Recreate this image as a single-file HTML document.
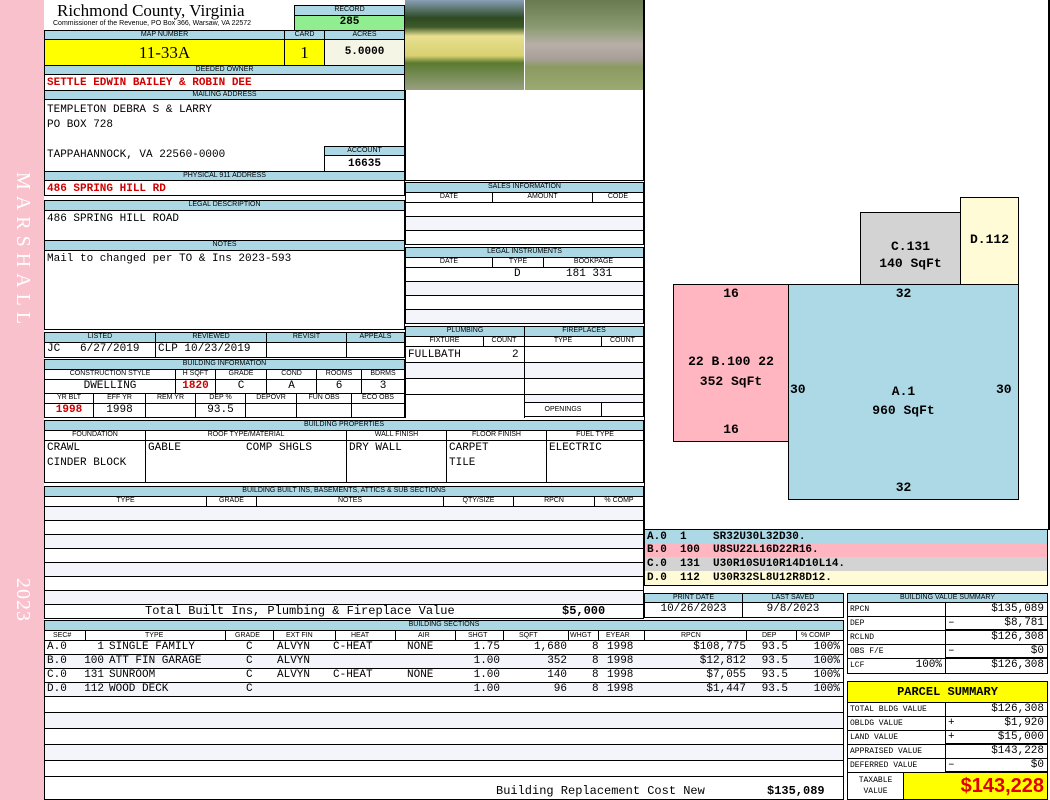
<!DOCTYPE html>
<html><head><meta charset="utf-8"><style>
body{margin:0;width:1050px;height:800px;position:relative;background:#fff;overflow:hidden;font-family:"Liberation Sans",sans-serif}
div{position:absolute;box-sizing:border-box}
.h{background:#acd8e6;border:1px solid #000;font-size:7px;text-align:center;line-height:8px;color:#000;white-space:nowrap;overflow:hidden}
.c{border:1px solid #000;font-family:"Liberation Mono",monospace;font-size:11px;line-height:13px;white-space:nowrap;overflow:hidden;padding-left:2px}
.r{color:#d00000;font-weight:bold}
.ctr{text-align:center;padding:0}
.rt{text-align:right;padding-right:3px}
.sk{font-family:"Liberation Mono",monospace;font-size:13px;font-weight:bold;text-align:center}
.lg{font-family:"Liberation Mono",monospace;font-size:11px;font-weight:bold;line-height:14px;padding-left:2px;height:14px;left:644px;width:404px;border-left:1px solid #000;border-right:1px solid #000;white-space:pre}
.alt{background:#f3f5fa}
.s span{position:absolute;top:0}
.s .a{left:2px}.s .b{left:29px;width:30px;text-align:right}.s .t{left:64px}.s .g{left:201px}.s .e{left:232px}.s .ht{left:288px}.s .ai{left:362px}
.s .sh{left:407px;width:48px;text-align:right}.s .sq{left:473px;width:49px;text-align:right}.s .w{left:547px}.s .y{left:562px}
.s .rp{left:640px;width:61px;text-align:right}.s .dp{left:700px;width:43px;text-align:right}.s .pc{left:750px;width:45px;text-align:right}
.hd span{position:absolute}
.hd i{position:absolute;top:-1px;height:11px;border-left:1px solid #000}
</style></head><body>
<!-- sidebar -->
<div style="left:0;top:0;width:44px;height:800px;background:#f9c1cc"></div>
<div style="left:34px;top:172px;transform-origin:0 0;transform:rotate(90deg);color:#fff;font-family:'Liberation Serif',serif;font-size:20px;letter-spacing:6px;white-space:nowrap">MARSHALL</div>
<div style="left:34px;top:578px;transform-origin:0 0;transform:rotate(90deg);color:#fff;font-family:'Liberation Serif',serif;font-size:20px;letter-spacing:1px;white-space:nowrap">2023</div>

<!-- header -->
<div style="left:57px;top:1px;font-family:'Liberation Serif',serif;font-size:17px;white-space:nowrap">Richmond County, Virginia</div>
<div style="left:53px;top:20px;font-size:7px;white-space:nowrap">Commissioner of the Revenue, PO Box 366, Warsaw, VA 22572</div>
<div class="h" style="left:294px;top:5px;width:111px;height:11px">RECORD</div>
<div class="c ctr" style="left:294px;top:15px;width:111px;height:16px;background:#90ee90;font-weight:bold;font-size:11px">285</div>
<div class="h" style="left:44px;top:30px;width:241px;height:10px">MAP NUMBER</div>
<div class="h" style="left:284px;top:30px;width:41px;height:10px">CARD</div>
<div class="h" style="left:324px;top:30px;width:81px;height:10px">ACRES</div>
<div class="c ctr" style="left:44px;top:39px;width:241px;height:27px;background:#ffff00;font-family:'Liberation Serif',serif;font-size:17px;line-height:25px">11-33A</div>
<div class="c ctr" style="left:284px;top:39px;width:41px;height:27px;background:#ffff00;font-family:'Liberation Serif',serif;font-size:17px;line-height:25px">1</div>
<div class="c ctr" style="left:324px;top:39px;width:81px;height:27px;background:#f5f5e6;font-weight:bold;line-height:25px">5.0000</div>
<div class="h" style="left:44px;top:65px;width:361px;height:10px">DEEDED OWNER</div>
<div class="c r" style="left:44px;top:74px;width:361px;height:17px;line-height:17px">SETTLE EDWIN BAILEY &amp; ROBIN DEE</div>
<div class="h" style="left:44px;top:90px;width:361px;height:10px">MAILING ADDRESS</div>
<div class="c" style="left:44px;top:99px;width:361px;height:73px;padding-top:3px;line-height:15px">TEMPLETON DEBRA S &amp; LARRY<br>PO BOX 728<br><br>TAPPAHANNOCK, VA 22560-0000</div>
<div class="h" style="left:324px;top:146px;width:81px;height:10px">ACCOUNT</div>
<div class="c ctr" style="left:324px;top:155px;width:81px;height:17px;font-weight:bold;line-height:16px">16635</div>
<div class="h" style="left:44px;top:171px;width:361px;height:10px">PHYSICAL 911 ADDRESS</div>
<div class="c r" style="left:44px;top:180px;width:361px;height:16px;line-height:16px">486 SPRING HILL RD</div>
<div class="h" style="left:44px;top:200px;width:361px;height:11px">LEGAL DESCRIPTION</div>
<div class="c" style="left:44px;top:210px;width:361px;height:31px;padding-top:2px">486 SPRING HILL ROAD</div>
<div class="h" style="left:44px;top:240px;width:361px;height:11px">NOTES</div>
<div class="c" style="left:44px;top:250px;width:361px;height:80px;padding-top:2px">Mail to changed per TO &amp; Ins 2023-593</div>

<!-- listed -->
<div class="h" style="left:44px;top:332px;width:112px;height:11px">LISTED</div>
<div class="h" style="left:155px;top:332px;width:112px;height:11px">REVIEWED</div>
<div class="h" style="left:266px;top:332px;width:81px;height:11px">REVISIT</div>
<div class="h" style="left:346px;top:332px;width:59px;height:11px">APPEALS</div>
<div class="c" style="left:44px;top:342px;width:112px;height:16px">JC &nbsp;&nbsp;6/27/2019</div>
<div class="c" style="left:155px;top:342px;width:112px;height:16px">CLP 10/23/2019</div>
<div class="c" style="left:266px;top:342px;width:81px;height:16px"></div>
<div class="c" style="left:346px;top:342px;width:59px;height:16px"></div>

<!-- building info -->
<div class="h" style="left:44px;top:359px;width:361px;height:11px">BUILDING INFORMATION</div>
<div class="h" style="left:44px;top:369px;width:132px;height:11px;background:#fff">CONSTRUCTION STYLE</div>
<div class="h" style="left:175px;top:369px;width:41px;height:11px;background:#fff">H SQFT</div>
<div class="h" style="left:215px;top:369px;width:52px;height:11px;background:#fff">GRADE</div>
<div class="h" style="left:266px;top:369px;width:51px;height:11px;background:#fff">COND</div>
<div class="h" style="left:316px;top:369px;width:46px;height:11px;background:#fff">ROOMS</div>
<div class="h" style="left:361px;top:369px;width:44px;height:11px;background:#fff">BDRMS</div>
<div class="c ctr" style="left:44px;top:379px;width:132px;height:15px">DWELLING</div>
<div class="c ctr r" style="left:175px;top:379px;width:41px;height:15px">1820</div>
<div class="c ctr" style="left:215px;top:379px;width:52px;height:15px">C</div>
<div class="c ctr" style="left:266px;top:379px;width:51px;height:15px">A</div>
<div class="c ctr" style="left:316px;top:379px;width:46px;height:15px">6</div>
<div class="c ctr" style="left:361px;top:379px;width:44px;height:15px">3</div>
<div class="h" style="left:44px;top:393px;width:50px;height:11px;background:#fff">YR BLT</div>
<div class="h" style="left:93px;top:393px;width:53px;height:11px;background:#fff">EFF YR</div>
<div class="h" style="left:145px;top:393px;width:51px;height:11px;background:#fff">REM YR</div>
<div class="h" style="left:195px;top:393px;width:51px;height:11px;background:#fff">DEP %</div>
<div class="h" style="left:245px;top:393px;width:52px;height:11px;background:#fff">DEPOVR</div>
<div class="h" style="left:296px;top:393px;width:56px;height:11px;background:#fff">FUN OBS</div>
<div class="h" style="left:351px;top:393px;width:54px;height:11px;background:#fff">ECO OBS</div>
<div class="c ctr r" style="left:44px;top:403px;width:50px;height:15px">1998</div>
<div class="c ctr" style="left:93px;top:403px;width:53px;height:15px">1998</div>
<div class="c" style="left:145px;top:403px;width:51px;height:15px"></div>
<div class="c ctr" style="left:195px;top:403px;width:51px;height:15px">93.5</div>
<div class="c" style="left:245px;top:403px;width:52px;height:15px"></div>
<div class="c" style="left:296px;top:403px;width:56px;height:15px"></div>
<div class="c" style="left:351px;top:403px;width:54px;height:15px"></div>

<!-- photos -->
<div style="left:405px;top:0;width:239px;height:181px;border:1px solid #000;border-top:none"></div>
<div style="left:405px;top:0;width:119px;height:90px;background:linear-gradient(180deg,#8aa0b8 0%,#2d4a22 20%,#3e5a2a 30%,#e8e090 40%,#d8d070 62%,#5a7a30 70%,#98a080 100%)"></div>
<div style="left:525px;top:0;width:118px;height:90px;background:linear-gradient(180deg,#6a7a50 0%,#8a9a70 30%,#b8b0a8 50%,#a8a098 65%,#8a9a60 75%,#9aaa70 100%)"></div>

<!-- sales -->
<div class="h" style="left:405px;top:182px;width:239px;height:11px">SALES INFORMATION</div>
<div class="h" style="left:405px;top:192px;width:88px;height:11px;background:#fff">DATE</div>
<div class="h" style="left:492px;top:192px;width:101px;height:11px;background:#fff">AMOUNT</div>
<div class="h" style="left:592px;top:192px;width:52px;height:11px;background:#fff">CODE</div>
<div class="c" style="left:405px;top:202px;width:239px;height:15px"></div>
<div class="c alt" style="left:405px;top:216px;width:239px;height:15px"></div>
<div class="c" style="left:405px;top:230px;width:239px;height:15px"></div>
<div class="h" style="left:405px;top:247px;width:239px;height:11px">LEGAL INSTRUMENTS</div>
<div class="h" style="left:405px;top:257px;width:88px;height:11px;background:#fff">DATE</div>
<div class="h" style="left:492px;top:257px;width:52px;height:11px;background:#fff">TYPE</div>
<div class="h" style="left:543px;top:257px;width:101px;height:11px;background:#fff">BOOKPAGE</div>
<div class="c" style="left:405px;top:267px;width:239px;height:15px"><span style="position:absolute;left:108px">D</span><span style="position:absolute;left:160px">181 331</span></div>
<div class="c alt" style="left:405px;top:281px;width:239px;height:15px"></div>
<div class="c" style="left:405px;top:295px;width:239px;height:15px"></div>
<div class="c alt" style="left:405px;top:309px;width:239px;height:15px"></div>

<!-- plumbing -->
<div class="h" style="left:405px;top:326px;width:120px;height:11px">PLUMBING</div>
<div class="h" style="left:524px;top:326px;width:120px;height:11px">FIREPLACES</div>
<div class="h" style="left:405px;top:336px;width:79px;height:11px;background:#fff">FIXTURE</div>
<div class="h" style="left:483px;top:336px;width:42px;height:11px;background:#fff">COUNT</div>
<div class="h" style="left:524px;top:336px;width:78px;height:11px;background:#fff">TYPE</div>
<div class="h" style="left:601px;top:336px;width:43px;height:11px;background:#fff">COUNT</div>
<div class="c" style="left:405px;top:346px;width:120px;height:17px;line-height:16px">FULLBATH<span style="position:absolute;left:106px">2</span></div>
<div class="c alt" style="left:405px;top:362px;width:120px;height:17px"></div>
<div class="c" style="left:405px;top:378px;width:120px;height:17px"></div>
<div class="c" style="left:405px;top:394px;width:120px;height:24px;border-bottom:none"></div>
<div class="c" style="left:524px;top:346px;width:120px;height:17px"></div>
<div class="c alt" style="left:524px;top:362px;width:120px;height:17px"></div>
<div class="c" style="left:524px;top:378px;width:120px;height:17px"></div>
<div class="c alt" style="left:524px;top:394px;width:120px;height:9px"></div>
<div class="h" style="left:524px;top:402px;width:78px;height:15px;background:#fff;line-height:13px">OPENINGS</div>
<div class="c" style="left:601px;top:402px;width:43px;height:15px"></div>

<!-- building properties -->
<div class="h" style="left:44px;top:420px;width:600px;height:11px">BUILDING PROPERTIES</div>
<div class="h" style="left:44px;top:430px;width:102px;height:11px;background:#fff">FOUNDATION</div>
<div class="h" style="left:145px;top:430px;width:202px;height:11px;background:#fff">ROOF TYPE/MATERIAL</div>
<div class="h" style="left:346px;top:430px;width:101px;height:11px;background:#fff">WALL FINISH</div>
<div class="h" style="left:446px;top:430px;width:101px;height:11px;background:#fff">FLOOR FINISH</div>
<div class="h" style="left:546px;top:430px;width:98px;height:11px;background:#fff">FUEL TYPE</div>
<div class="c" style="left:44px;top:440px;width:102px;height:43px;line-height:15px">CRAWL<br>CINDER BLOCK</div>
<div class="c" style="left:145px;top:440px;width:202px;height:43px;line-height:15px">GABLE<span style="position:absolute;left:100px">COMP SHGLS</span></div>
<div class="c" style="left:346px;top:440px;width:101px;height:43px;line-height:15px">DRY WALL</div>
<div class="c" style="left:446px;top:440px;width:101px;height:43px;line-height:15px">CARPET<br>TILE</div>
<div class="c" style="left:546px;top:440px;width:98px;height:43px;line-height:15px">ELECTRIC</div>

<!-- built ins -->
<div class="h" style="left:44px;top:486px;width:600px;height:11px">BUILDING BUILT INS, BASEMENTS, ATTICS &amp; SUB SECTIONS</div>
<div class="h" style="left:44px;top:496px;width:163px;height:11px;background:#fff">TYPE</div>
<div class="h" style="left:206px;top:496px;width:51px;height:11px;background:#fff">GRADE</div>
<div class="h" style="left:256px;top:496px;width:188px;height:11px;background:#fff">NOTES</div>
<div class="h" style="left:443px;top:496px;width:71px;height:11px;background:#fff">QTY/SIZE</div>
<div class="h" style="left:513px;top:496px;width:82px;height:11px;background:#fff">RPCN</div>
<div class="h" style="left:594px;top:496px;width:50px;height:11px;background:#fff">% COMP</div>
<div class="c alt" style="left:44px;top:506px;width:600px;height:15px"></div>
<div class="c" style="left:44px;top:520px;width:600px;height:15px"></div>
<div class="c alt" style="left:44px;top:534px;width:600px;height:15px"></div>
<div class="c" style="left:44px;top:548px;width:600px;height:15px"></div>
<div class="c alt" style="left:44px;top:562px;width:600px;height:15px"></div>
<div class="c" style="left:44px;top:576px;width:600px;height:15px"></div>
<div class="c alt" style="left:44px;top:590px;width:600px;height:15px"></div>
<div class="c" style="left:44px;top:604px;width:600px;height:15px;font-size:12px"><span style="position:absolute;left:100px">Total Built Ins, Plumbing &amp; Fireplace Value</span><span style="position:absolute;left:517px;font-weight:bold">$5,000</span></div>

<!-- building sections -->
<div class="h" style="left:44px;top:620px;width:800px;height:11px">BUILDING SECTIONS</div>
<div class="hd" style="left:44px;top:630px;width:800px;height:11px;border:1px solid #000;font-size:7px;line-height:9px">
<span style="left:8px">SEC#</span><span style="left:100px">TYPE</span><span style="left:190px">GRADE</span><span style="left:241px">EXT FIN</span><span style="left:306px">HEAT</span><span style="left:373px">AIR</span><span style="left:423px">SHGT</span><span style="left:474px">SQFT</span><span style="left:525px">WHGT</span><span style="left:561px">EYEAR</span><span style="left:636px">RPCN</span><span style="left:717px">DEP</span><span style="left:756px">% COMP</span>
<i style="left:40px"></i><i style="left:180px"></i><i style="left:228px"></i><i style="left:290px"></i><i style="left:350px"></i><i style="left:410px"></i><i style="left:458px"></i><i style="left:523px"></i><i style="left:553px"></i><i style="left:599px"></i><i style="left:701px"></i><i style="left:751px"></i>
</div>
<div class="c s" style="left:44px;top:640px;width:800px;height:15px"><span class="a">A.0</span><span class="b">1</span><span class="t">SINGLE FAMILY</span><span class="g">C</span><span class="e">ALVYN</span><span class="ht">C-HEAT</span><span class="ai">NONE</span><span class="sh">1.75</span><span class="sq">1,680</span><span class="w">8</span><span class="y">1998</span><span class="rp">$108,775</span><span class="dp">93.5</span><span class="pc">100%</span></div>
<div class="c s alt" style="left:44px;top:654px;width:800px;height:15px"><span class="a">B.0</span><span class="b">100</span><span class="t">ATT FIN GARAGE</span><span class="g">C</span><span class="e">ALVYN</span><span class="sh">1.00</span><span class="sq">352</span><span class="w">8</span><span class="y">1998</span><span class="rp">$12,812</span><span class="dp">93.5</span><span class="pc">100%</span></div>
<div class="c s" style="left:44px;top:668px;width:800px;height:15px"><span class="a">C.0</span><span class="b">131</span><span class="t">SUNROOM</span><span class="g">C</span><span class="e">ALVYN</span><span class="ht">C-HEAT</span><span class="ai">NONE</span><span class="sh">1.00</span><span class="sq">140</span><span class="w">8</span><span class="y">1998</span><span class="rp">$7,055</span><span class="dp">93.5</span><span class="pc">100%</span></div>
<div class="c s alt" style="left:44px;top:682px;width:800px;height:15px"><span class="a">D.0</span><span class="b">112</span><span class="t">WOOD DECK</span><span class="g">C</span><span class="sh">1.00</span><span class="sq">96</span><span class="w">8</span><span class="y">1998</span><span class="rp">$1,447</span><span class="dp">93.5</span><span class="pc">100%</span></div>
<div class="c" style="left:44px;top:696px;width:800px;height:17px"></div>
<div class="c alt" style="left:44px;top:712px;width:800px;height:17px"></div>
<div class="c" style="left:44px;top:728px;width:800px;height:17px"></div>
<div class="c alt" style="left:44px;top:744px;width:800px;height:17px"></div>
<div class="c" style="left:44px;top:760px;width:800px;height:17px"></div>
<div class="c" style="left:44px;top:776px;width:800px;height:24px;font-size:12px"><span style="position:absolute;left:451px;top:8px">Building Replacement Cost New</span><span style="position:absolute;left:722px;top:8px;font-weight:bold">$135,089</span></div>

<!-- sketch -->
<div style="left:644px;top:0;width:406px;height:530px;border-left:1px solid #000;border-right:2px solid #000"></div>
<div style="left:860px;top:212px;width:101px;height:73px;background:#d3d3d3;border:1px solid #000"></div>
<div style="left:960px;top:197px;width:59px;height:88px;background:#fffbd6;border:1px solid #000"></div>
<div style="left:673px;top:284px;width:116px;height:158px;background:#ffb6c1;border:1px solid #000"></div>
<div style="left:788px;top:284px;width:231px;height:216px;background:#add8e6;border:1px solid #000"></div>
<div class="sk" style="left:860px;top:238px;width:101px;line-height:17px">C.131<br>140 SqFt</div>
<div class="sk" style="left:960px;top:232px;width:59px">D.112</div>
<div class="sk" style="left:673px;top:286px;width:116px">16</div>
<div class="sk" style="left:673px;top:422px;width:116px">16</div>
<div class="sk" style="left:673px;top:352px;width:116px;line-height:20px">22 B.100 22<br>352 SqFt</div>
<div class="sk" style="left:788px;top:286px;width:231px">32</div>
<div class="sk" style="left:788px;top:480px;width:231px">32</div>
<div class="sk" style="left:790px;top:382px">30</div>
<div class="sk" style="left:996px;top:382px">30</div>
<div class="sk" style="left:788px;top:382px;width:231px;line-height:19px">A.1<br>960 SqFt</div>

<!-- legend -->
<div class="lg" style="top:529px;background:#add8e6;border-top:1px solid #000">A.0  1    SR32U30L32D30.</div>
<div class="lg" style="top:543px;background:#ffb6c1">B.0  100  U8SU22L16D22R16.</div>
<div class="lg" style="top:557px;background:#d3d3d3">C.0  131  U30R10SU10R14D10L14.</div>
<div class="lg" style="top:571px;background:#fffbd6;border-bottom:1px solid #000;height:15px">D.0  112  U30R32SL8U12R8D12.</div>

<!-- print date -->
<div class="h" style="left:644px;top:593px;width:99px;height:10px">PRINT DATE</div>
<div class="h" style="left:742px;top:593px;width:102px;height:10px">LAST SAVED</div>
<div class="c ctr" style="left:644px;top:602px;width:99px;height:16px">10/26/2023</div>
<div class="c ctr" style="left:742px;top:602px;width:102px;height:16px">9/8/2023</div>

<!-- building value summary -->
<div class="h" style="left:847px;top:593px;width:201px;height:10px">BUILDING VALUE SUMMARY</div>
<div class="c" style="left:847px;top:602px;width:99px;height:15px;font-size:8px">RPCN</div>
<div class="c rt" style="left:945px;top:602px;width:103px;height:15px">$135,089</div>
<div class="c" style="left:847px;top:616px;width:99px;height:15px;font-size:8px">DEP</div>
<div class="c" style="left:945px;top:616px;width:103px;height:15px;border-bottom:2px solid #000">–<span style="position:absolute;right:3px">$8,781</span></div>
<div class="c" style="left:847px;top:630px;width:99px;height:15px;font-size:8px">RCLND</div>
<div class="c rt" style="left:945px;top:630px;width:103px;height:15px">$126,308</div>
<div class="c" style="left:847px;top:644px;width:99px;height:15px;font-size:8px">OBS F/E</div>
<div class="c" style="left:945px;top:644px;width:103px;height:15px;border-bottom:2px solid #000">–<span style="position:absolute;right:3px">$0</span></div>
<div class="c" style="left:847px;top:658px;width:99px;height:16px;font-size:8px">LCF<span style="position:absolute;right:3px;font-size:11px">100%</span></div>
<div class="c rt" style="left:945px;top:658px;width:103px;height:16px">$126,308</div>

<!-- parcel summary -->
<div class="c ctr" style="left:847px;top:681px;width:201px;height:22px;background:#ffff00;font-weight:bold;font-size:12px;line-height:20px">PARCEL SUMMARY</div>
<div class="c" style="left:847px;top:702px;width:99px;height:15px;font-size:8px">TOTAL BLDG VALUE</div>
<div class="c rt" style="left:945px;top:702px;width:103px;height:15px">$126,308</div>
<div class="c" style="left:847px;top:716px;width:99px;height:15px;font-size:8px">OBLDG VALUE</div>
<div class="c" style="left:945px;top:716px;width:103px;height:15px">+<span style="position:absolute;right:3px">$1,920</span></div>
<div class="c" style="left:847px;top:730px;width:99px;height:15px;font-size:8px">LAND VALUE</div>
<div class="c" style="left:945px;top:730px;width:103px;height:15px;border-bottom:2px solid #000">+<span style="position:absolute;right:3px">$15,000</span></div>
<div class="c" style="left:847px;top:744px;width:99px;height:15px;font-size:8px">APPRAISED VALUE</div>
<div class="c rt" style="left:945px;top:744px;width:103px;height:15px">$143,228</div>
<div class="c" style="left:847px;top:758px;width:99px;height:15px;font-size:8px">DEFERRED VALUE</div>
<div class="c" style="left:945px;top:758px;width:103px;height:15px;border-bottom:2px solid #000">–<span style="position:absolute;right:3px">$0</span></div>
<div class="c ctr" style="left:847px;top:772px;width:57px;height:28px;font-size:8px;line-height:11px;padding-top:2px">TAXABLE<br>VALUE</div>
<div class="c rt" style="left:903px;top:772px;width:145px;height:28px;background:#ffff00;color:#e00000;font-family:'Liberation Sans',sans-serif;font-weight:bold;font-size:20px;line-height:26px">$143,228</div>
</body></html>
